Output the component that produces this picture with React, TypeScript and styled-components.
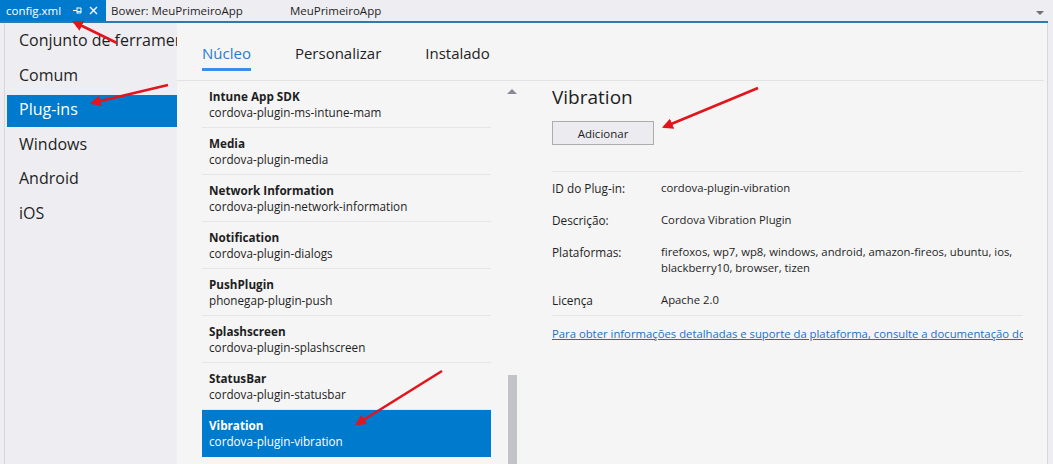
import React from 'react';
import styled, { createGlobalStyle } from 'styled-components';

const GlobalStyle = createGlobalStyle`
  html, body {
    margin: 0;
    padding: 0;
    background: #eeeef2;
  }
  body {
    font-family: "Open Sans", "Noto Sans", sans-serif;
    color: #1e1e1e;
  }
`;

const sidebarItems = ['Conjunto de ferramentas', 'Comum', 'Plug-ins', 'Windows', 'Android', 'iOS'];

const plugins = [
  { name: 'Intune App SDK', id: 'cordova-plugin-ms-intune-mam' },
  { name: 'Media', id: 'cordova-plugin-media' },
  { name: 'Network Information', id: 'cordova-plugin-network-information' },
  { name: 'Notification', id: 'cordova-plugin-dialogs' },
  { name: 'PushPlugin', id: 'phonegap-plugin-push' },
  { name: 'Splashscreen', id: 'cordova-plugin-splashscreen' },
  { name: 'StatusBar', id: 'cordova-plugin-statusbar' },
  { name: 'Vibration', id: 'cordova-plugin-vibration' },
];

const arrows = [
  { x1: 117, y1: 43, x2: 74, y2: 22 },
  { x1: 168, y1: 85, x2: 92, y2: 103 },
  { x1: 758, y1: 88, x2: 664, y2: 127 },
  { x1: 442, y1: 371, x2: 357, y2: 424 },
];

export default function App() {
  return (
    <>
      <GlobalStyle />
      <Frame>
        <TabStrip>
          <DocTab $active>
            <span>config.xml</span>
            <svg width="11" height="9" viewBox="0 0 11 9">
              <path d="M1 4.5h4M5 1.5v6M5 2h4v5H5M5 5.5h4" stroke="#fff" strokeWidth="1" fill="none" />
            </svg>
            <svg width="9" height="9" viewBox="0 0 9 9">
              <path d="M1 1l7 7M8 1l-7 7" stroke="#fff" strokeWidth="1.4" />
            </svg>
          </DocTab>
          <DocTab>Bower: MeuPrimeiroApp</DocTab>
          <DocTab>MeuPrimeiroApp</DocTab>
          <Spacer />
          <DropArrow />
        </TabStrip>
        <Body>
          <Sidebar>
            {sidebarItems.map((s) => (
              <SideItem key={s} $selected={s === 'Plug-ins'}>{s}</SideItem>
            ))}
          </Sidebar>
          <Main>
            <Header>
              <HeaderTab $active>Núcleo</HeaderTab>
              <HeaderTab>Personalizar</HeaderTab>
              <HeaderTab>Instalado</HeaderTab>
            </Header>
            <Content>
              <PluginList>
                {plugins.map((p) => (
                  <PluginItem key={p.id} $selected={p.name === 'Vibration'}>
                    <strong>{p.name}</strong>
                    <span>{p.id}</span>
                  </PluginItem>
                ))}
              </PluginList>
              <ScrollBar>
                <UpArrow />
                <Thumb />
              </ScrollBar>
              <Details>
                <Title>Vibration</Title>
                <AddButton>Adicionar</AddButton>
                <InfoTable>
                  <Row>
                    <Label>ID do Plug-in:</Label>
                    <Value>cordova-plugin-vibration</Value>
                  </Row>
                  <Row>
                    <Label>Descrição:</Label>
                    <Value>Cordova Vibration Plugin</Value>
                  </Row>
                  <Row>
                    <Label>Plataformas:</Label>
                    <Value>
                      firefoxos, wp7, wp8, windows, android, amazon-fireos, ubuntu, ios,
                      <br />
                      blackberry10, browser, tizen
                    </Value>
                  </Row>
                  <Row>
                    <Label>Licença</Label>
                    <Value>Apache 2.0</Value>
                  </Row>
                </InfoTable>
                <DocLink href="#">
                  Para obter informações detalhadas e suporte da plataforma, consulte a documentação do plug-in
                </DocLink>
              </Details>
            </Content>
          </Main>
        </Body>
        <Annotations width="1053" height="464" viewBox="0 0 1053 464">
          <defs>
            <marker id="head" viewBox="0 0 10 10" refX="8" refY="5" markerWidth="4.2" markerHeight="4.2" orient="auto">
              <path d="M0 0L10 5L0 10z" fill="#e2141c" />
            </marker>
          </defs>
          {arrows.map((a, i) => (
            <line key={i} x1={a.x1} y1={a.y1} x2={a.x2} y2={a.y2} stroke="#e2141c" strokeWidth="2.6" markerEnd="url(#head)" />
          ))}
        </Annotations>
      </Frame>
    </>
  );
}

const Frame = styled.div`
  position: relative;
  width: 1053px;
  height: 464px;
  overflow: hidden;
  display: flex;
  flex-direction: column;
  background: #eeeef2;
`;

const TabStrip = styled.div`
  display: flex;
  align-items: stretch;
  height: 21px;
  border-bottom: 2px solid #2f7aa8;
  margin-right: 5px;
`;

const DocTab = styled.div<{ $active?: boolean }>`
  display: flex;
  align-items: center;
  gap: 6px;
  padding-left: ${(p) => (p.$active ? '6px' : '5px')};
  padding-right: ${(p) => (p.$active ? '8px' : '42px')};
  font-size: 11.5px;
  color: ${(p) => (p.$active ? '#fff' : '#1e1e1e')};
  background: ${(p) => (p.$active ? '#007acc' : 'transparent')};
  span {
    margin-right: 5px;
  }
`;

const Spacer = styled.div`
  flex: 1;
`;

const DropArrow = styled.div`
  align-self: center;
  margin: 4px 4px 0 0;
  width: 0;
  height: 0;
  border-left: 4px solid transparent;
  border-right: 4px solid transparent;
  border-top: 4px solid #717171;
`;

const Body = styled.div`
  flex: 1;
  display: flex;
  margin-left: 4px;
  margin-right: 5px;
  border-left: 1px solid #d6d6dc;
  border-right: 1px solid #d6d6dc;
  min-height: 0;
`;

const Sidebar = styled.div`
  width: 170px;
  flex-shrink: 0;
  padding: 3px 0 0 2px;
  background: #eeeef2;
`;

const SideItem = styled.div<{ $selected?: boolean }>`
  height: 32px;
  box-sizing: border-box;
  line-height: 28px;
  padding: 0 10px 4px 12px;
  margin-bottom: 2.5px;
  font-size: 16px;
  white-space: nowrap;
  overflow: hidden;
  color: ${(p) => (p.$selected ? '#fff' : '#1e1e1e')};
  background: ${(p) => (p.$selected ? '#007acc' : 'transparent')};
`;

const Main = styled.div`
  flex: 1;
  display: flex;
  flex-direction: column;
  background: #f5f5f5;
  min-width: 0;
`;

const Header = styled.div`
  height: 58px;
  display: flex;
  align-items: flex-start;
  gap: 44px;
  padding: 19px 0 0 25px;
  box-sizing: border-box;
  border-bottom: 1px solid #e2e2e4;
  margin-right: 3px;
`;

const HeaderTab = styled.div<{ $active?: boolean }>`
  font-size: 15px;
  line-height: 22px;
  padding-bottom: 4px;
  color: ${(p) => (p.$active ? '#2a7bd0' : '#1e1e1e')};
  border-bottom: 3px solid ${(p) => (p.$active ? '#3a8ee6' : 'transparent')};
`;

const Content = styled.div`
  flex: 1;
  display: flex;
  padding-left: 25px;
  min-height: 0;
`;

const PluginList = styled.div`
  width: 289px;
  flex-shrink: 0;
`;

const PluginItem = styled.div<{ $selected?: boolean }>`
  display: flex;
  flex-direction: column;
  padding: 7px 7px 7px;
  border-bottom: 1px solid ${(p) => (p.$selected ? '#007acc' : '#e6e6e8')};
  background: ${(p) => (p.$selected ? '#007acc' : 'transparent')};
  color: ${(p) => (p.$selected ? '#fff' : '#1e1e1e')};
  font-size: 11.7px;
  line-height: 16px;
  strong {
    font-weight: 700;
  }
`;

const ScrollBar = styled.div`
  width: 10px;
  margin-left: 16px;
  display: flex;
  flex-direction: column;
  align-items: center;
`;

const UpArrow = styled.div`
  margin-top: 8px;
  width: 0;
  height: 0;
  border-left: 5px solid transparent;
  border-right: 5px solid transparent;
  border-bottom: 5px solid #868999;
`;

const Thumb = styled.div`
  margin-top: auto;
  width: 9px;
  height: 89px;
  background: #c2c3c9;
`;

const Details = styled.div`
  width: 471px;
  margin-left: 35px;
  overflow: hidden;
  font-size: 11.3px;
`;

const Title = styled.div`
  font-size: 19px;
  line-height: 26px;
  margin-top: 3px;
  color: #1e1e1e;
`;

const AddButton = styled.button`
  display: block;
  margin-top: 11px;
  width: 102px;
  height: 24px;
  font-family: inherit;
  font-size: 11.5px;
  color: #1e1e1e;
  background: #ececf0;
  border: 1px solid #acacac;
  padding: 0;
`;

const InfoTable = styled.div`
  margin-top: 26px;
  border-top: 1px solid #e6e6e8;
  border-bottom: 1px solid #e6e6e8;
  padding: 8px 0 7px;
  display: flex;
  flex-direction: column;
  gap: 16px;
`;

const Row = styled.div`
  display: flex;
  line-height: 16px;
`;

const Label = styled.div`
  width: 109px;
  flex-shrink: 0;
  font-size: 11.8px;
`;

const Value = styled.div`
  white-space: nowrap;
`;

const DocLink = styled.a`
  display: block;
  margin-top: 10px;
  line-height: 16px;
  white-space: nowrap;
  color: #1e6fbf;
  text-decoration: underline;
`;

const Annotations = styled.svg`
  position: absolute;
  left: 0;
  top: 0;
  pointer-events: none;
`;
